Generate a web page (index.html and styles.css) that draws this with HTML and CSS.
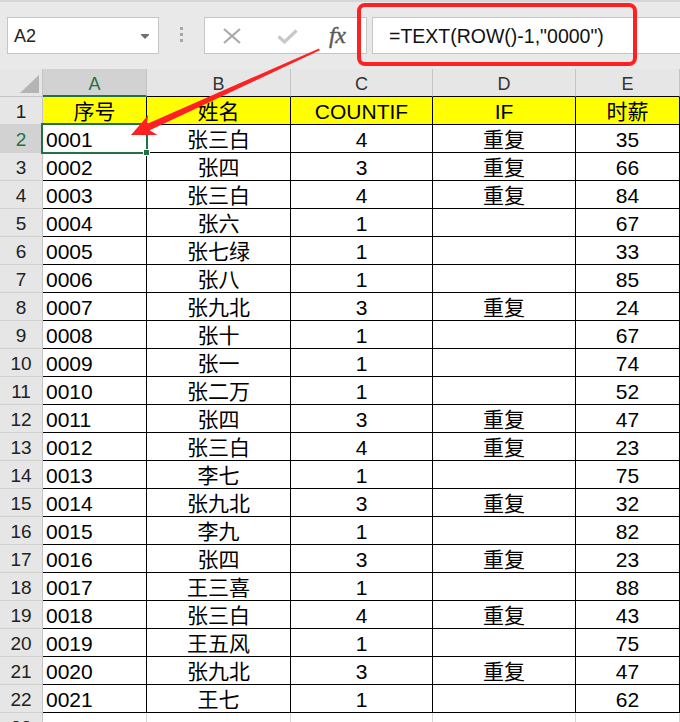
FILE: index.html
```html
<!DOCTYPE html>
<html lang="zh">
<head>
<meta charset="utf-8">
<link rel="stylesheet" href="styles.css">
</head>
<body>
<div class="page">
  <div class="toolbar">
    <div class="namebox"><span class="nb-text">A2</span><span class="nb-arrow"></span></div>
    <div class="dots"><i></i><i></i><i></i></div>
    <div class="fxbox">
      <svg class="ic-x" width="18" height="16" viewBox="0 0 18 16"><path d="M1 1 L17 15 M17 1 L1 15" stroke="#a8a8a8" stroke-width="2.2" fill="none"/></svg>
      <svg class="ic-ok" width="21" height="15" viewBox="0 0 21 15"><path d="M1.5 7.5 L7.5 13 L19.5 1.5" stroke="#c8c8c8" stroke-width="3.2" fill="none"/></svg>
      <span class="fx">fx</span>
    </div>
    <div class="formula">=TEXT(ROW()-1,"0000")</div>
  </div>

  <div class="sheet">
    <div class="corner"><span class="tri"></span></div>
    <div class="ch sel">A</div><div class="ch">B</div><div class="ch">C</div><div class="ch">D</div><div class="ch">E</div>

    <div class="rh">1</div>
    <div class="c y ctr">序号</div><div class="c y ctr">姓名</div><div class="c y ctr">COUNTIF</div><div class="c y ctr">IF</div><div class="c y ctr">时薪</div>

    <div class="rh sel">2</div>
    <div class="c active">0001</div><div class="c ctr">张三白</div><div class="c ctr">4</div><div class="c ctr">重复</div><div class="c ctr">35</div>
    <div class="rh">3</div>
    <div class="c">0002</div><div class="c ctr">张四</div><div class="c ctr">3</div><div class="c ctr">重复</div><div class="c ctr">66</div>
    <div class="rh">4</div>
    <div class="c">0003</div><div class="c ctr">张三白</div><div class="c ctr">4</div><div class="c ctr">重复</div><div class="c ctr">84</div>
    <div class="rh">5</div>
    <div class="c">0004</div><div class="c ctr">张六</div><div class="c ctr">1</div><div class="c ctr"></div><div class="c ctr">67</div>
    <div class="rh">6</div>
    <div class="c">0005</div><div class="c ctr">张七绿</div><div class="c ctr">1</div><div class="c ctr"></div><div class="c ctr">33</div>
    <div class="rh">7</div>
    <div class="c">0006</div><div class="c ctr">张八</div><div class="c ctr">1</div><div class="c ctr"></div><div class="c ctr">85</div>
    <div class="rh">8</div>
    <div class="c">0007</div><div class="c ctr">张九北</div><div class="c ctr">3</div><div class="c ctr">重复</div><div class="c ctr">24</div>
    <div class="rh">9</div>
    <div class="c">0008</div><div class="c ctr">张十</div><div class="c ctr">1</div><div class="c ctr"></div><div class="c ctr">67</div>
    <div class="rh">10</div>
    <div class="c">0009</div><div class="c ctr">张一</div><div class="c ctr">1</div><div class="c ctr"></div><div class="c ctr">74</div>
    <div class="rh">11</div>
    <div class="c">0010</div><div class="c ctr">张二万</div><div class="c ctr">1</div><div class="c ctr"></div><div class="c ctr">52</div>
    <div class="rh">12</div>
    <div class="c">0011</div><div class="c ctr">张四</div><div class="c ctr">3</div><div class="c ctr">重复</div><div class="c ctr">47</div>
    <div class="rh">13</div>
    <div class="c">0012</div><div class="c ctr">张三白</div><div class="c ctr">4</div><div class="c ctr">重复</div><div class="c ctr">23</div>
    <div class="rh">14</div>
    <div class="c">0013</div><div class="c ctr">李七</div><div class="c ctr">1</div><div class="c ctr"></div><div class="c ctr">75</div>
    <div class="rh">15</div>
    <div class="c">0014</div><div class="c ctr">张九北</div><div class="c ctr">3</div><div class="c ctr">重复</div><div class="c ctr">32</div>
    <div class="rh">16</div>
    <div class="c">0015</div><div class="c ctr">李九</div><div class="c ctr">1</div><div class="c ctr"></div><div class="c ctr">82</div>
    <div class="rh">17</div>
    <div class="c">0016</div><div class="c ctr">张四</div><div class="c ctr">3</div><div class="c ctr">重复</div><div class="c ctr">23</div>
    <div class="rh">18</div>
    <div class="c">0017</div><div class="c ctr">王三喜</div><div class="c ctr">1</div><div class="c ctr"></div><div class="c ctr">88</div>
    <div class="rh">19</div>
    <div class="c">0018</div><div class="c ctr">张三白</div><div class="c ctr">4</div><div class="c ctr">重复</div><div class="c ctr">43</div>
    <div class="rh">20</div>
    <div class="c">0019</div><div class="c ctr">王五风</div><div class="c ctr">1</div><div class="c ctr"></div><div class="c ctr">75</div>
    <div class="rh">21</div>
    <div class="c">0020</div><div class="c ctr">张九北</div><div class="c ctr">3</div><div class="c ctr">重复</div><div class="c ctr">47</div>
    <div class="rh">22</div>
    <div class="c">0021</div><div class="c ctr">王七</div><div class="c ctr">1</div><div class="c ctr"></div><div class="c ctr">62</div>

    <div class="rh">23</div>
    <div class="c e"></div><div class="c e"></div><div class="c e"></div><div class="c e"></div><div class="c e"></div>
  </div>

  <div class="redbox"></div>
  <svg class="arrow" width="680" height="722" viewBox="0 0 680 722">
    <polygon fill="#ff2121" points="131,135 148.3,115 146.8,124 319,48.4 319.8,50.2 149.7,130.3 157.4,135.1"/>
  </svg>
</div>
</body>
</html>
```

FILE: styles.css
```css
html, body {
  margin: 0;
  padding: 0;
  background: #ffffff;
}
.page {
  position: relative;
  width: 680px;
  height: 722px;
  overflow: hidden;
  font-family: "Liberation Sans", "Noto Sans CJK SC", sans-serif;
}

/* ---------- formula bar ---------- */
.toolbar {
  box-sizing: border-box;
  height: 69px;
  background: #e9e9e9;
  border-top: 2px solid #d6d6d6;
  padding-top: 15px;
  display: flex;
  align-items: flex-start;
}
.namebox {
  box-sizing: border-box;
  margin-left: 7px;
  width: 152px;
  height: 37px;
  background: #fff;
  border: 1px solid #c6c6c6;
  display: flex;
  align-items: center;
  padding-left: 6px;
  padding-right: 9px;
}
.nb-text {
  flex: 1;
  font-size: 18px;
  color: #222;
  padding-top: 1px;
}
.nb-arrow {
  width: 0;
  height: 0;
  border-left: 4px solid transparent;
  border-right: 4px solid transparent;
  border-top: 4px solid #707070;
  box-shadow: 0 -1px 0 #707070;
  margin-top: 2px;
}
.dots {
  margin-left: 21px;
  margin-top: 10px;
  display: flex;
  flex-direction: column;
  gap: 3px;
}
.dots i {
  display: block;
  width: 3px;
  height: 3px;
  background: #a8a8a8;
}
.fxbox {
  box-sizing: border-box;
  margin-left: 21px;
  width: 163px;
  height: 37px;
  background: #fff;
  border: 1px solid #c6c6c6;
  display: flex;
  align-items: center;
  padding-left: 18px;
}
.ic-ok { margin-left: 36px; margin-top: 1px; }
.fx {
  margin-left: 31px;
  font-family: "Liberation Serif", serif;
  font-style: italic;
  font-size: 24px;
  color: #5a5a5a;
  letter-spacing: -0.5px;
  -webkit-text-stroke: 0.4px #5a5a5a;
}
.formula {
  box-sizing: border-box;
  margin-left: 5px;
  flex: 1;
  height: 37px;
  background: #fff;
  border: 1px solid #c6c6c6;
  border-right: none;
  display: flex;
  align-items: center;
  padding-left: 16px;
  font-size: 19.5px;
  color: #111;
  white-space: nowrap;
  padding-top: 1px;
}

/* ---------- sheet ---------- */
.sheet {
  display: grid;
  grid-template-columns: 43px 104px 144px 142px 143px 104px;
  grid-auto-rows: 28px;
}
.corner {
  position: relative;
  box-sizing: border-box;
  background: #e6e6e6;
  border-right: 1px solid #c4c4c4;
  border-bottom: 1px solid #c4c4c4;
}
.tri {
  position: absolute;
  right: 3px;
  bottom: 3px;
  width: 0;
  height: 0;
  border-left: 19px solid transparent;
  border-bottom: 18px solid #b4b4b4;
}
.ch {
  box-sizing: border-box;
  background: #e6e6e6;
  border-right: 1px solid #c4c4c4;
  border-bottom: 1px solid #000;
  text-align: center;
  font-size: 18px;
  line-height: 24px;
  padding-top: 3px;
  color: #333;
}
.ch.sel {
  background: #d2d2d2;
  color: #217346;
  border-bottom: 2px solid #217346;
}
.rh {
  box-sizing: border-box;
  background: #e6e6e6;
  border-right: 1px solid #c4c4c4;
  border-bottom: 1px solid #d0d0d0;
  text-align: center;
  font-size: 19px;
  line-height: 25px;
  padding-top: 2px;
  color: #222;
}
.rh.sel {
  background: #d2d2d2;
  color: #217346;
}
.c {
  box-sizing: border-box;
  border-right: 1px solid #000;
  border-bottom: 1px solid #000;
  font-size: 21px;
  line-height: 25px;
  padding-top: 2px;
  padding-left: 3px;
  color: #000;
  white-space: nowrap;
  overflow: hidden;
}
.c.ctr {
  text-align: center;
  padding-left: 0;
}
.c.y {
  background: #ffff00;
}
.c.e {
  border-right: 1px solid #d4d4d4;
  border-bottom: 1px solid #d4d4d4;
}
.c.active {
  position: relative;
  overflow: visible;
}
.c.active::after {
  content: "";
  position: absolute;
  left: -2px;
  top: -2px;
  right: -2px;
  bottom: -2px;
  border: 2px solid #217346;
}
.c.active::before {
  content: "";
  position: absolute;
  right: -4px;
  bottom: -4px;
  width: 5px;
  height: 5px;
  background: #217346;
  border: 1px solid #fff;
  z-index: 2;
}

/* ---------- annotations ---------- */
.redbox {
  position: absolute;
  left: 357px;
  top: 3px;
  width: 280px;
  height: 63px;
  box-sizing: border-box;
  border: 4px solid #ff2121;
  border-radius: 8px;
}
.arrow {
  position: absolute;
  left: 0;
  top: 0;
  pointer-events: none;
}
```
